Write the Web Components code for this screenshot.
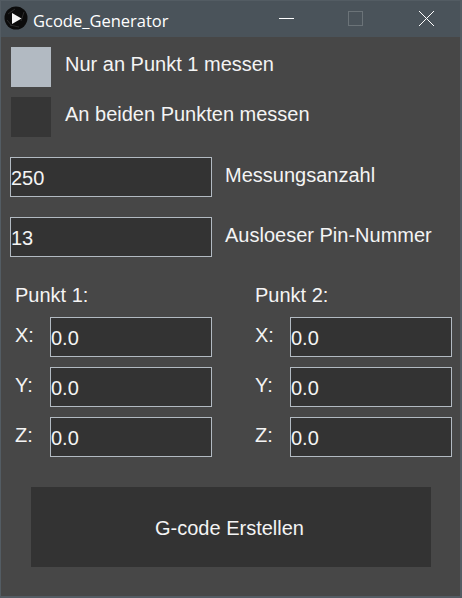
<!DOCTYPE html>
<html lang="de">
<head>
<meta charset="utf-8">
<title>Gcode_Generator</title>
<style>
  html, body { margin: 0; height: 100%; background: #474747; }
  body { font: 20px "Liberation Sans", Arial, sans-serif; color: #f4f4f4; }
</style>
</head>
<body>
<gcode-window>
  <title-bar title="Gcode_Generator"></title-bar>
  <main-form></main-form>
</gcode-window>

<script>
class GcodeWindow extends HTMLElement {
  constructor() {
    super();
    this.attachShadow({ mode: "open" });
    this.shadowRoot.innerHTML = `
      <style>
        :host {
          display: flex;
          flex-direction: column;
          box-sizing: border-box;
          width: 462px;
          height: 598px;
          background: #474747;
          border: 1px solid #535c63;
          border-right-width: 2px;
          border-bottom-width: 2px;
        }
      </style>
      <slot></slot>
    `;
  }
}

class TitleBar extends HTMLElement {
  constructor() {
    super();
    this.attachShadow({ mode: "open" });
  }

  connectedCallback() {
    const title = this.getAttribute("title") || "";
    this.shadowRoot.innerHTML = `
      <style>
        :host {
          display: flex;
          align-items: center;
          height: 36px;
          flex: none;
          background: #4a535a;
          color: #fff;
          font: 16.5px "Open Sans", "Noto Sans", sans-serif;
        }
        .logo { width: 24px; height: 24px; margin: -2px 0 0 3px; flex: none; }
        .name { margin-left: 5px; flex: 1; position: relative; top: 1px; }
        .ctl { height: 36px; display: flex; align-items: center; justify-content: center; flex: none; }
        .ctl svg { width: 16px; height: 16px; overflow: visible; }
        .min { width: 62px; }
        .max { width: 76px; }
        .close { width: 66px; }
      </style>
      <svg class="logo" viewBox="0 0 24 24">
        <circle cx="12" cy="12" r="11.5" fill="#0b0b0b"/>
        <path d="M4 8l7-5M20 6l-3 9M6 19l9 2M3 14l5 6" stroke="#2b2b2b" stroke-width="1" fill="none"/>
        <polygon points="8,7 17.5,12.5 8,18" fill="#f4f4f4"/>
      </svg>
      <span class="name">${title}</span>
      <div class="ctl min">
        <svg viewBox="0 0 16 16"><path d="M0 7.5H15" stroke="#fff" stroke-width="1"/></svg>
      </div>
      <div class="ctl max">
        <svg viewBox="0 0 16 16"><rect x="0.5" y="0.5" width="14" height="14" fill="none" stroke="#6b7378"/></svg>
      </div>
      <div class="ctl close">
        <svg viewBox="0 0 16 16"><path d="M0 0L15 15M15 0L0 15" stroke="#fff" stroke-width="1"/></svg>
      </div>
    `;
  }
}

// square toggle with its label to the right
class CheckRow extends HTMLElement {
  constructor() {
    super();
    this.attachShadow({ mode: "open" });
  }

  connectedCallback() {
    const checked = this.hasAttribute("checked");
    this.shadowRoot.innerHTML = `
      <style>
        :host { display: flex; align-items: center; height: 40px; font-size: 20px; }
        .box { width: 40px; height: 40px; flex: none; background: ${checked ? "#b2bac2" : "#363636"}; }
        .label { margin-left: 14px; position: relative; top: -3px; }
      </style>
      <div class="box"></div>
      <span class="label"><slot></slot></span>
    `;
  }
}

class TextField extends HTMLElement {
  constructor() {
    super();
    this.attachShadow({ mode: "open" });
  }

  connectedCallback() {
    const value = this.getAttribute("value") || "";
    const width = this.getAttribute("width") || "162";
    this.shadowRoot.innerHTML = `
      <style>
        :host { display: block; flex: none; width: ${width}px; height: 40px; }
        input {
          box-sizing: border-box;
          display: block;
          width: 100%;
          height: 100%;
          margin: 0;
          padding: 2px 0 0 0;
          border: 1px solid #b2bac2;
          border-radius: 0;
          background: #333;
          color: #f4f4f4;
          font: 20px "Liberation Sans", Arial, sans-serif;
          outline: none;
        }
      </style>
      <input type="text" value="${value}">
    `;
  }
}

class FieldRow extends HTMLElement {
  constructor() {
    super();
    this.attachShadow({ mode: "open" });
  }

  connectedCallback() {
    const value = this.getAttribute("value");
    this.shadowRoot.innerHTML = `
      <style>
        :host { display: flex; align-items: center; height: 40px; font-size: 20px; }
        .label { margin-left: 13px; position: relative; top: -2px; }
      </style>
      <text-field width="202" value="${value}"></text-field>
      <span class="label"><slot></slot></span>
    `;
  }
}

class PointColumn extends HTMLElement {
  constructor() {
    super();
    this.attachShadow({ mode: "open" });
  }

  connectedCallback() {
    const axes = ["X", "Y", "Z"];
    this.shadowRoot.innerHTML = `
      <style>
        :host { display: flex; flex-direction: column; width: 197px; font-size: 20px; }
        .head { height: 20px; line-height: 20px; margin-bottom: 12px; }
        .axis { display: flex; align-items: center; height: 40px; margin-bottom: 10px; }
        .axis:last-child { margin-bottom: 0; }
        .axis span { width: 35px; flex: none; position: relative; top: -2px; }
      </style>
      <div class="head">${this.getAttribute("title")}</div>
      ${axes.map((a) => `
        <div class="axis"><span>${a}:</span><text-field value="0.0"></text-field></div>
      `).join("")}
    `;
  }
}

class ActionButton extends HTMLElement {
  constructor() {
    super();
    this.attachShadow({ mode: "open" });
    this.shadowRoot.innerHTML = `
      <style>
        :host {
          display: flex;
          align-items: center;
          justify-content: center;
          box-sizing: border-box;
          width: 400px;
          height: 80px;
          padding: 2px 3px 0 0;
          background: #333;
          font-size: 20px;
        }
      </style>
      <slot></slot>
    `;
  }
}

class MainForm extends HTMLElement {
  constructor() {
    super();
    this.attachShadow({ mode: "open" });
    this.shadowRoot.innerHTML = `
      <style>
        :host { display: flex; flex-direction: column; padding: 10px 0 0 9px; }
        .checks { display: flex; flex-direction: column; gap: 10px; padding-left: 1px; }
        .fields { display: flex; flex-direction: column; gap: 20px; margin-top: 20px; }
        .points { display: flex; gap: 43px; margin-top: 28px; padding-left: 5px; }
        action-button { margin: 30px 0 0 21px; }
      </style>
      <div class="checks">
        <check-row checked>Nur an Punkt 1 messen</check-row>
        <check-row>An beiden Punkten messen</check-row>
      </div>
      <div class="fields">
        <field-row value="250">Messungsanzahl</field-row>
        <field-row value="13">Ausloeser Pin-Nummer</field-row>
      </div>
      <div class="points">
        <point-column title="Punkt 1:"></point-column>
        <point-column title="Punkt 2:"></point-column>
      </div>
      <action-button>G-code Erstellen</action-button>
    `;
  }
}

customElements.define("gcode-window", GcodeWindow);
customElements.define("title-bar", TitleBar);
customElements.define("check-row", CheckRow);
customElements.define("text-field", TextField);
customElements.define("field-row", FieldRow);
customElements.define("point-column", PointColumn);
customElements.define("action-button", ActionButton);
customElements.define("main-form", MainForm);
</script>
</body>
</html>
